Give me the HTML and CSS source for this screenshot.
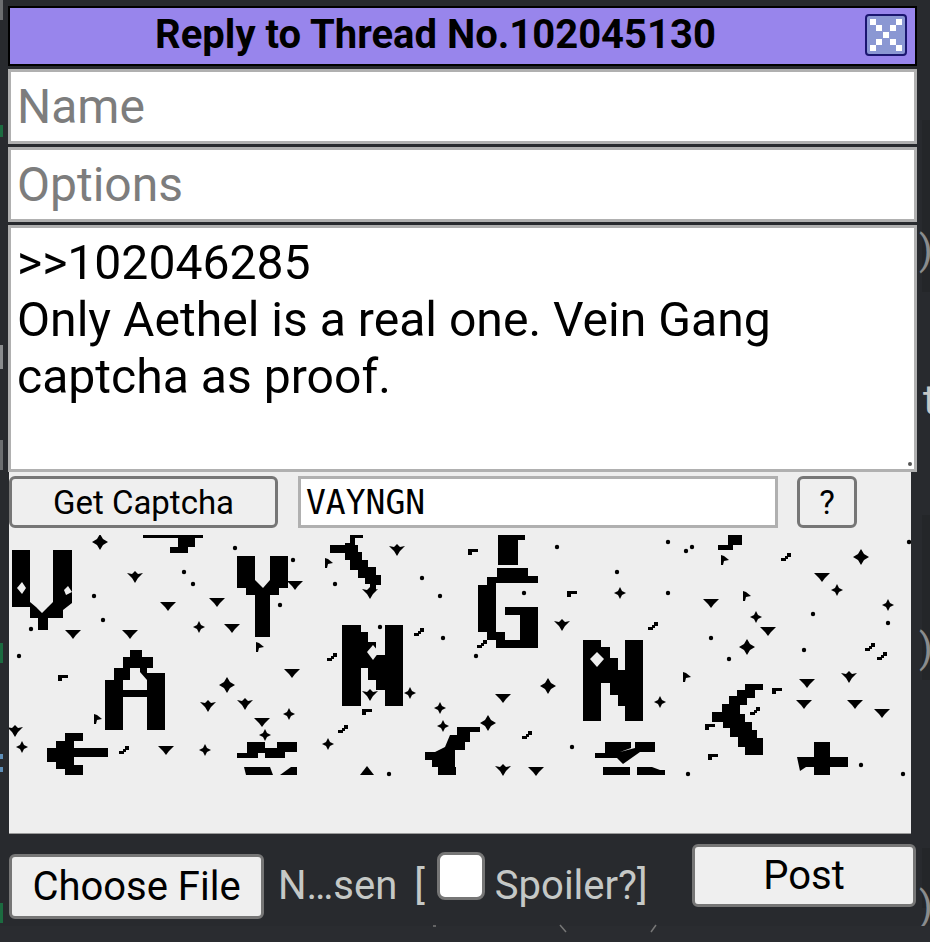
FILE: index.html
```html
<!DOCTYPE html>
<html lang="en">
<head>
<meta charset="utf-8">
<title>Reply to Thread</title>
<link rel="stylesheet" href="styles.css">
</head>
<body>
<div class="behind" aria-hidden="true">
  <span class="bg-bar bg-bar-a"></span>
  <span class="bg-bar bg-bar-b"></span>
  <span class="bg-bar bg-bar-c"></span>
  <span class="bg-bit bg-bit-a"></span>
  <span class="bg-bit bg-bit-b"></span>
  <span class="bg-bit bg-bit-c"></span>
  <span class="bg-blue bg-blue-a"></span>
  <span class="bg-blue bg-blue-b"></span>
  <span class="bg-band bg-band-a"></span>
  <span class="bg-band bg-band-b"></span>
  <span class="bg-band bg-band-c"></span>
  <span class="bg-char bg-char-a">)</span>
  <span class="bg-char bg-char-b">t</span>
  <span class="bg-char bg-char-c">)</span>
  <span class="bg-char bg-char-d">)</span>
  <span class="bg-floor"></span>
  <svg class="bg-marks" viewBox="0 0 930 20"><path d="M433 2H436M560 1L566 8M656 1L651 8" stroke="#777" stroke-width="1.5" fill="none"/></svg>
</div>
<form class="qr">
  <header class="qr-head">
    <span class="qr-title">Reply to Thread No.102045130</span>
    <svg class="qr-close" viewBox="0 0 42 42" aria-label="Close">
      <rect x="1" y="1" width="40" height="40" rx="3" fill="#8a97d3" stroke="#1b1670" stroke-width="2"/>
      <g fill="#fff">
        <rect x="5" y="5" width="6" height="6"/><rect x="31" y="5" width="6" height="6"/>
        <rect x="11" y="11" width="6" height="6"/><rect x="25" y="11" width="6" height="6"/>
        <rect x="18" y="18" width="6" height="6"/>
        <rect x="11" y="25" width="6" height="6"/><rect x="25" y="25" width="6" height="6"/>
        <rect x="5" y="31" width="6" height="6"/><rect x="31" y="31" width="6" height="6"/>
      </g>
    </svg>
  </header>
  <input class="field" type="text" placeholder="Name">
  <input class="field" type="text" placeholder="Options">
  <div class="comment-wrap">
    <textarea class="comment">&gt;&gt;102046285
Only Aethel is a real one. Vein Gang captcha as proof.</textarea>
  </div>
  <div class="captcha">
    <div class="captcha-row">
      <button class="btn btn-get" type="button">Get Captcha</button>
      <input class="captcha-input" type="text" value="VAYNGN">
      <button class="btn btn-help" type="button">?</button>
    </div>
    <svg class="captcha-img" viewBox="9 535 902 298" role="img" aria-label="captcha picture">
      <defs>
        <path id="d" d="M0-8L3-3 8 0 3 3 0 8-3 3-8 0-3-3Z"/>
        <path id="s" d="M0-6L2-2 6 0 2 2 0 6-2 2-6 0-2-2Z"/>
        <path id="t" d="M-8-3H8L3 2 0 6-3 2Z"/>
        <path id="w" d="M-8-3L-3-2 0-5 3-2 8-3 3 2 0 7-3 2Z"/>
        <path id="f" d="M-3-5L0-4 5 0 0 1-1 5H-3Z"/>
        <path id="q" d="M-5 1H-1V-1H1V-4H5V0H2V2H0V4H-5Z"/>
        <path id="r" d="M-5-3H5V0H-1V3H-5Z"/>
        <circle id="o" r="2.2"/>
      </defs>
      <g fill="#000">
        <path d="M12 550H30V602L36 607 42 613 48 607 53 602V550H72V603L63 610V618H48V630H38V618H30V607H12Z"/>
        <path d="M237 556H255V580L263 588 270 580V556H288V588H279V595H270V637H255V595H246V588H237Z"/>
        <path fill-rule="evenodd" d="M105 730V680H114V668H123V657H130V650H142V657H153V668H147V673L165 673V730H147V697H123V730ZM123 690H147V680L140 672V668H130V680H123Z"/>
        <path d="M342 625H361V632H368V642H376V655H385V625H403V706H385V690H376V680H368V668H361V706H342Z"/>
        <path d="M583 640H601V647H610V658H618V670H625V640H643V721H625V706H618V695H610V683H601V721H583Z"/>
        <path d="M497 568H528V576H538V583H496V632H505V640H520V615H505V607H538V648H496V640H487V632H478V585H487V577H497Z"/>
        <path d="M498 535H525V540H518V565H498Z"/>
        <path d="M143 535H203V538H195V547H188V553H170V547H178V538H143Z"/>
        <path d="M330 545H345V543H350V535H363V538H355V545H358V552H362V560H368V567H376V575H381V585H376V590H370V584H365V578H358V570H350V560H345V553H330Z"/>
        <path d="M718 545H728V535H742V545H733V550H718Z"/>
        <path d="M47 748H56V741H65V733H83V741H74V748H108V757H74V765H83V775H65V769H56V762H47Z"/>
        <path d="M237 753H247V742H265V748H277V742H297V752H285V758H265V753H258V758H237Z"/>
        <path d="M244 767H270L273 775H246ZM280 775L291 767H297V775Z"/>
        <path d="M595 753H605V742H631V748L620 752 635 748V742H655V752H640L623 764 617 758H595Z"/>
        <path d="M603 767H630V775H603ZM637 767H652L660 770H665V775H637Z"/>
        <path d="M425 752H435L445 747 450 735H457V727H480V732H470V742H465V750H455V767H456V775H438V767H432V760H425Z"/>
        <path d="M745 684H763V690H755V698H747V705H740V714H745V722H752V730H757V738H763V755H745V747H738V737H730V728H723V722H712V712H722V704H729V696H737V690H745Z"/>
        <path d="M797 757H814V742H830V757H848V767H830V775H814V767H806L800 771Z"/>
      </g>
      <g fill="#eee">
        <path d="M22 582L26 588 22 594 17 588Z"/>
        <path d="M68 586L72 592 66 595 64 590Z"/>
        <path d="M373 645L379 652 373 660 367 652Z"/>
        <path d="M597 652L604 659 597 667 590 659Z"/>
      </g>
      <g fill="#000">
        <use href="#d" x="100" y="542"/><use href="#d" x="227" y="685"/><use href="#d" x="861" y="557"/><use href="#d" x="747" y="647"/><use href="#d" x="548" y="686"/><use href="#d" x="488" y="723"/>
        <use href="#s" x="199" y="627"/><use href="#s" x="837" y="590"/><use href="#s" x="888" y="605"/><use href="#s" x="756" y="617"/><use href="#s" x="620" y="593"/><use href="#s" x="22" y="747"/><use href="#s" x="289" y="714"/><use href="#s" x="265" y="735"/><use href="#s" x="205" y="750"/><use href="#s" x="328" y="744"/><use href="#s" x="440" y="708"/><use href="#s" x="443" y="726"/><use href="#s" x="410" y="693"/><use href="#s" x="660" y="702"/>
        <use href="#w" x="135" y="576"/><use href="#w" x="397" y="549"/><use href="#w" x="370" y="592"/><use href="#w" x="562" y="624"/><use href="#w" x="849" y="676"/><use href="#w" x="15" y="730"/><use href="#w" x="208" y="705"/><use href="#w" x="245" y="703"/><use href="#w" x="370" y="694"/><use href="#w" x="503" y="769"/>
        <use href="#t" x="168" y="605"/><use href="#t" x="217" y="601"/><use href="#t" x="232" y="627"/><use href="#t" x="73" y="633"/><use href="#t" x="130" y="633"/><use href="#t" x="295" y="584"/><use href="#t" x="292" y="672"/><use href="#t" x="711" y="602"/><use href="#t" x="822" y="576"/><use href="#t" x="768" y="630"/><use href="#t" x="807" y="682"/><use href="#t" x="166" y="749"/><use href="#t" x="262" y="721"/><use href="#t" x="503" y="697"/><use href="#t" x="536" y="770"/><use href="#t" x="804" y="703"/><use href="#t" x="855" y="703"/><use href="#t" x="882" y="712"/>
        <use href="#f" x="259" y="647"/><use href="#f" x="328" y="563"/><use href="#f" x="724" y="560"/><use href="#f" x="746" y="596"/><use href="#f" x="686" y="677"/><use href="#f" x="97" y="719"/>
        <use href="#q" x="419" y="632"/><use href="#q" x="786" y="557"/><use href="#q" x="653" y="626"/><use href="#q" x="482" y="644"/><use href="#q" x="870" y="647"/><use href="#q" x="882" y="656"/><use href="#q" x="124" y="750"/><use href="#q" x="343" y="729"/><use href="#q" x="527" y="735"/><use href="#q" x="332" y="657"/><use href="#q" x="755" y="711"/>
        <use href="#r" x="63" y="678"/><use href="#r" x="473" y="552"/><use href="#r" x="572" y="594"/><use href="#r" x="367" y="712"/><use href="#r" x="713" y="757"/><use href="#r" x="710" y="727"/><use href="#r" x="777" y="691"/>
        <use href="#o" x="184" y="572"/><use href="#o" x="193" y="584"/><use href="#o" x="94" y="596"/><use href="#o" x="103" y="620"/><use href="#o" x="31" y="629"/><use href="#o" x="19" y="656"/><use href="#o" x="235" y="548"/><use href="#o" x="293" y="560"/><use href="#o" x="280" y="605"/><use href="#o" x="335" y="584"/><use href="#o" x="422" y="578"/><use href="#o" x="440" y="596"/><use href="#o" x="443" y="638"/><use href="#o" x="380" y="627"/><use href="#o" x="557" y="547"/><use href="#o" x="668" y="542"/><use href="#o" x="686" y="551"/><use href="#o" x="692" y="547"/><use href="#o" x="617" y="572"/><use href="#o" x="668" y="593"/><use href="#o" x="524" y="593"/><use href="#o" x="813" y="614"/><use href="#o" x="888" y="623"/><use href="#o" x="711" y="638"/><use href="#o" x="729" y="659"/><use href="#o" x="804" y="650"/><use href="#o" x="476" y="656"/><use href="#o" x="909" y="542"/><use href="#o" x="572" y="747"/><use href="#o" x="861" y="765"/><use href="#o" x="903" y="774"/><use href="#o" x="688" y="774"/><use href="#o" x="389" y="774"/>
        <path d="M360 775L367 766 374 775Z"/>
      </g>
    </svg>
  </div>
  <div class="qr-foot">
    <button class="btn btn-file" type="button">Choose File</button>
    <span class="foot-text foot-none">N…sen</span>
    <span class="foot-text foot-open">[</span>
    <span class="spoiler-box"></span>
    <span class="foot-text foot-spoiler">Spoiler?]</span>
    <button class="btn btn-post" type="button">Post</button>
  </div>
</form>
</body>
</html>
```
FILE: styles.css
```css
* { box-sizing: border-box; }
html, body { margin: 0; height: 100%; }
body {
  background: #282a2e;
  font-family: Roboto, sans-serif;
  overflow: hidden;
  padding: 6px 13px 0 8px;
  position: relative;
}
.behind span, .bg-marks { position: absolute; }
.bg-floor { left: 0; right: 0; top: 926px; height: 16px; background: #2a2c30; }
.bg-marks { left: 0; top: 924px; width: 930px; height: 20px; }
.bg-bar { left: 0; width: 3px; height: 20px; background: #1c6b40; }
.bg-bar-a { top: 125px; height: 12px; }
.bg-bar-b { top: 643px; }
.bg-bar-c { top: 903px; }
.bg-bit { left: 0; width: 3px; background: #6c6e70; }
.bg-bit-a { top: 0; height: 20px; }
.bg-bit-b { top: 345px; height: 24px; background: #8a8c8e; }
.bg-bit-c { top: 440px; height: 30px; }
.bg-blue { left: 0; width: 3px; height: 5px; background: #5f8fb8; }
.bg-blue-a { top: 754px; }
.bg-blue-b { top: 767px; }
.bg-band { left: 922px; width: 8px; background: #242629; }
.bg-band-a { top: 120px; height: 172px; }
.bg-band-b { top: 515px; height: 165px; }
.bg-band-c { top: 848px; height: 60px; }
.bg-char { color: #8a8c8e; font-size: 40px; line-height: 46px; }
.bg-char-a { left: 919px; top: 228px; }
.bg-char-b { left: 923px; top: 378px; color: #c5c8c6; }
.bg-char-c { left: 919px; top: 626px; }
.bg-char-d { left: 919px; top: 884px; }
.qr { display: flex; flex-direction: column; width: 909px; position: relative; }
.qr-head {
  height: 60px;
  background: #9885ec;
  border: 2px solid #000;
  display: flex;
  align-items: center;
  justify-content: center;
  position: relative;
}
.qr-title { font-weight: 700; font-size: 40px; color: #000; margin: 0 54px 3px 0; }
.qr-close { position: absolute; right: 8px; top: 6px; width: 42px; height: 42px; }
.field {
  display: block;
  width: 100%;
  height: 75px;
  margin-top: 3px;
  padding: 0 6px;
  border: 3px solid #b0b0b0;
  border-radius: 0;
  background: #fff;
  font-family: Roboto, sans-serif;
  font-size: 48px;
  outline: 0;
}
.field::placeholder { color: #7d7d7d; opacity: 1; }
.comment-wrap { position: relative; margin-top: 3px; height: 247px; }
.comment-wrap::after {
  content: "";
  position: absolute;
  right: 5px;
  bottom: 6px;
  width: 4px;
  height: 4px;
  border-radius: 50%;
  background: #555;
}
.comment {
  display: block;
  width: 100%;
  height: 247px;
  padding: 6px 6px;
  border: 3px solid #b0b0b0;
  background: #fff;
  font-family: Roboto, sans-serif;
  font-size: 48.1px;
  line-height: 57px;
  color: #000;
  outline: 0;
  resize: none;
}
.captcha { width: 902px; margin-left: 1px; background: #eee; border-bottom: 1px solid #999; display: flex; flex-direction: column; }
.captcha-row { height: 63px; padding-top: 4px; display: flex; align-items: flex-start; }
.btn {
  background: #efefef;
  border: 3px solid #767676;
  border-radius: 6px;
  color: #000;
  font-family: Roboto, sans-serif;
  padding: 0;
}
.btn-get { width: 269px; height: 52px; font-size: 33px; margin-left: 0; }
.captcha-input {
  width: 480px;
  height: 52px;
  margin-left: 20px;
  padding: 0 5px;
  border: 3px solid #b0b0b0;
  background: #fff;
  font-family: "DejaVu Sans Mono", monospace;
  font-size: 33px;
  outline: 0;
}
.btn-help { width: 60px; height: 52px; font-size: 33px; margin-left: 19px; }
.captcha-img { display: block; width: 902px; height: 298px; }
.qr-foot { height: 90px; display: flex; align-items: flex-start; position: relative; }
.btn-file { width: 255px; height: 65px; font-size: 40px; margin: 20px 0 0 1px; }
.foot-text { color: #c5c8c6; font-size: 40px; margin-top: 28px; }
.foot-none { margin-left: 14px; }
.foot-open { margin-left: 17px; }
.spoiler-box { width: 48px; height: 48px; margin: 18px 0 0 12px; background: #fff; border: 3px solid #767676; border-radius: 8px; }
.foot-spoiler { margin-left: 10px; }
.btn-post { width: 224px; height: 63px; font-size: 40px; margin: 10px 1px 0 auto; }
```
